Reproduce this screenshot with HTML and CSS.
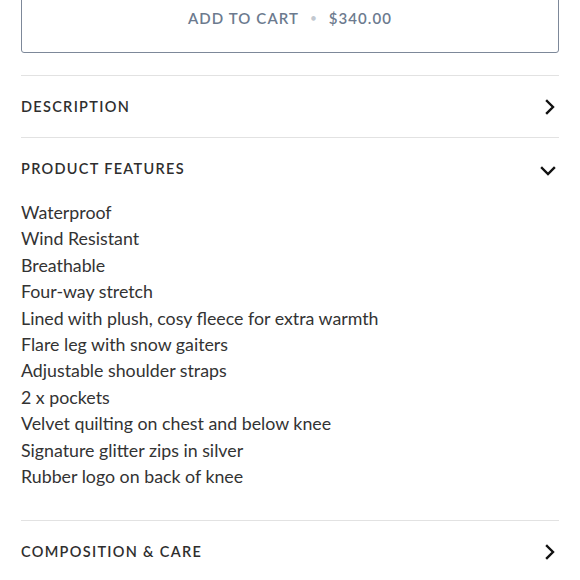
FILE: index.html
```html
<!DOCTYPE html>
<html>
<head>
<meta charset="utf-8">
<link rel="stylesheet" href="styles.css">
</head>
<body>
<div class="page">
  <button class="cart-btn">
    <span class="cart-label">ADD TO CART</span>
    <span class="cart-dot">•</span>
    <span class="cart-price">$340.00</span>
  </button>

  <div class="accordion">
    <div class="acc-item">
      <div class="acc-head">
        <span class="acc-title">DESCRIPTION</span>
        <svg class="chev-right" width="10" height="16" viewBox="0 0 10 16"><path d="M2 2 L8 8 L2 14" fill="none" stroke="#111" stroke-width="2.4" stroke-linecap="square"/></svg>
      </div>
    </div>
    <div class="acc-item">
      <div class="acc-head">
        <span class="acc-title">PRODUCT FEATURES</span>
        <svg class="chev-down" width="16" height="10" viewBox="0 0 16 10"><path d="M2 2 L8 8 L14 2" fill="none" stroke="#111" stroke-width="2.4" stroke-linecap="square"/></svg>
      </div>
      <ul class="features">
        <li>Waterproof</li>
        <li>Wind Resistant</li>
        <li>Breathable</li>
        <li>Four-way stretch</li>
        <li>Lined with plush, cosy fleece for extra warmth</li>
        <li>Flare leg with snow gaiters</li>
        <li>Adjustable shoulder straps</li>
        <li>2 x pockets</li>
        <li>Velvet quilting on chest and below knee</li>
        <li>Signature glitter zips in silver</li>
        <li>Rubber logo on back of knee</li>
      </ul>
    </div>
    <div class="acc-item">
      <div class="acc-head">
        <span class="acc-title">COMPOSITION &amp; CARE</span>
        <svg class="chev-right" width="10" height="16" viewBox="0 0 10 16"><path d="M2 2 L8 8 L2 14" fill="none" stroke="#111" stroke-width="2.4" stroke-linecap="square"/></svg>
      </div>
    </div>
  </div>
</div>
</body>
</html>
```

FILE: styles.css
```css
html, body {
  margin: 0;
  padding: 0;
  background: #ffffff;
  overflow: hidden;
}
.page {
  padding: 0 21px 0 21px;
  font-family: Lato, "Liberation Sans", sans-serif;
}
.cart-btn {
  display: flex;
  width: 100%;
  height: 71px;
  margin-top: -18px;
  align-items: center;
  justify-content: center;
  gap: 11px;
  background: #fff;
  border: 1.5px solid #7d8899;
  border-radius: 3px;
  font-family: Lato, "Liberation Sans", sans-serif;
  font-size: 15px;
  letter-spacing: 1.1px;
  color: #6c7a8e;
  font-weight: 600;
  padding: 0;
}
.cart-dot {
  color: #c2c8d0;
  font-size: 11px;
}
.accordion {
  margin-top: 22px;
}
.acc-item {
  border-top: 1.5px solid #e2e2e2;
}
.acc-head {
  height: 61px;
  display: flex;
  align-items: center;
  justify-content: space-between;
}
.acc-title {
  font-size: 14.5px;
  letter-spacing: 1.3px;
  color: #2e2e2e;
  font-weight: 600;
}
.chev-right {
  margin-right: 4px;
}
.chev-down {
  margin-right: 3px;
  margin-top: 4px;
}
.features {
  list-style: none;
  margin: 0;
  padding: 0 0 31px 0;
}
.features li {
  font-size: 17.8px;
  line-height: 26.4px;
  color: #333;
}
```
